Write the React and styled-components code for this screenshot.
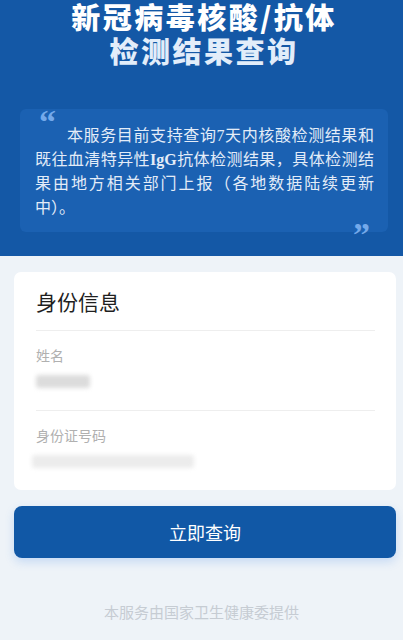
import React from "react";
import styled, { createGlobalStyle } from "styled-components";

const Global = createGlobalStyle`
  html, body { margin: 0; padding: 0; background: #eef3f8; }
  body { font-family: "Noto Sans CJK SC", "Noto Sans", sans-serif; }
  * { box-sizing: border-box; }
`;

const Page = styled.div`
  width: 403px;
  min-height: 640px;
  background: #eef3f8;
  display: flex;
  flex-direction: column;
`;

const Header = styled.header`
  background: #1458a6;
  padding: 0 15px 24px 20px;
  display: flex;
  flex-direction: column;
`;

const Title = styled.h1`
  margin: -1px 0 0;
  text-align: center;
  font-family: "Noto Sans CJK SC", sans-serif;
  font-weight: 900;
  font-size: 29px;
  line-height: 34px;
  letter-spacing: 2.5px;
`;

const TitleLine = styled.span`
  display: block;
  color: ${(p) => p.$tint};
`;

const QuoteBox = styled.div`
  position: relative;
  margin-top: 42px;
  background: #1b61b2;
  border-radius: 6px;
  padding: 15px 14px 12px 15px;
`;

const QuoteMark = styled.span`
  position: absolute;
  font-family: "Liberation Serif", serif;
  font-weight: 700;
  font-size: 34px;
  line-height: 1;
  color: #74a9ea;
  ${(p) => (p.$end ? "right: 18px; bottom: -20px;" : "left: 19px; top: -4px;")}
`;

const Notice = styled.p`
  margin: 0;
  font-family: "Liberation Serif", "Noto Sans CJK SC", serif;
  font-size: 16px;
  line-height: 24px;
  color: #e3ecf8;
  text-indent: 2em;
  text-align: justify;
  b { font-weight: 700; }
`;

const Card = styled.section`
  margin: 16px 7px 0 14px;
  background: #fff;
  border-radius: 7px;
  padding: 14px 21px 0 22px;
`;

const CardTitle = styled.h2`
  margin: 0;
  font-weight: 400;
  font-size: 21px;
  line-height: 30px;
  color: #1f1f1f;
  padding-bottom: 14px;
  border-bottom: 1px solid #eeeeee;
`;

const Field = styled.div`
  padding: 14px 0 22px;
  border-bottom: ${(p) => (p.$last ? "none" : "1px solid #eeeeee")};
`;

const Label = styled.div`
  font-size: 14px;
  line-height: 20px;
  color: #b0b0b0;
`;

const Blur = styled.div`
  margin-top: 10px;
  margin-left: ${(p) => p.$offset}px;
  width: ${(p) => p.$w}px;
  height: 13px;
  background: ${(p) => p.$c};
  filter: blur(2px);
  border-radius: 3px;
`;

const Button = styled.button`
  margin: 16px 7px 0 14px;
  height: 52px;
  border: none;
  border-radius: 8px;
  background: #1158a6;
  color: #fff;
  font-family: "Noto Sans CJK SC", sans-serif;
  font-size: 18px;
  box-shadow: 0 4px 10px rgba(60, 130, 230, 0.22);
`;

const Footer = styled.div`
  margin-top: 44px;
  text-align: center;
  font-size: 15px;
  line-height: 20px;
  color: #c6ccd3;
`;

export default function App() {
  return (
    <Page>
      <Global />
      <Header>
        <Title>
          <TitleLine $tint="#ffffff">新冠病毒核酸/抗体</TitleLine>
          <TitleLine $tint="#e2edfa">检测结果查询</TitleLine>
        </Title>
        <QuoteBox>
          <QuoteMark>“</QuoteMark>
          <Notice>
            本服务目前支持查询7天内核酸检测结果和既往血清特异性<b>IgG</b>抗体检测结果，具体检测结果由地方相关部门上报（各地数据陆续更新中）。
          </Notice>
          <QuoteMark $end>”</QuoteMark>
        </QuoteBox>
      </Header>
      <Card>
        <CardTitle>身份信息</CardTitle>
        <Field>
          <Label>姓名</Label>
          <Blur $w={54} $offset={0} $c="#dcdcdc" />
        </Field>
        <Field $last>
          <Label>身份证号码</Label>
          <Blur $w={162} $offset={-4} $c="#ececec" />
        </Field>
      </Card>
      <Button>立即查询</Button>
      <Footer>本服务由国家卫生健康委提供</Footer>
    </Page>
  );
}
